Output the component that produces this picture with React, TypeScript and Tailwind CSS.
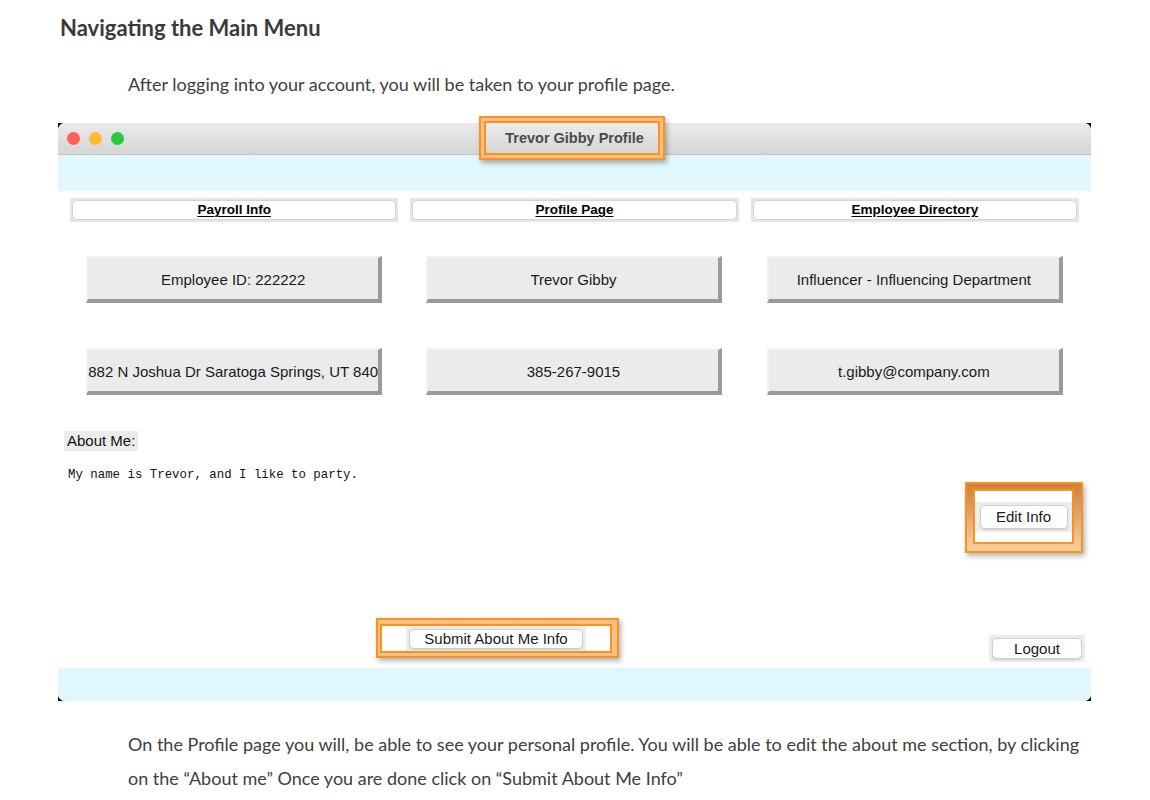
import React from "react";

const sans = { fontFamily: '"Liberation Sans", Arial, sans-serif' };

function Tab({ label }: { label: string }) {
  return (
    <div className="h-[24px] bg-[#e6e6e6] p-[2px] flex">
      <div className="flex-1 bg-white rounded-[5px] border border-[#d4d4d4] flex items-center justify-center">
        <span className="text-[13.5px] font-bold underline underline-offset-2 text-black leading-none">{label}</span>
      </div>
    </div>
  );
}

function InfoBtn({ label }: { label: string }) {
  return (
    <div className="w-[296px] h-[47px] pt-[3px] bg-[#ebebeb] border-t-2 border-l-2 border-t-[#f2f2f2] border-l-[#f2f2f2] border-b-4 border-r-4 border-b-[#9a9a9a] border-r-[#9a9a9a] flex items-center justify-center overflow-hidden">
      <span className="text-[15px] text-[#1a1a1a] whitespace-nowrap">{label}</span>
    </div>
  );
}

function MacBtn({ label, w }: { label: string; w: string }) {
  return (
    <div className={`${w} bg-white rounded-[5px] border border-[#cfcfcf] shadow-[0_1px_1px_rgba(0,0,0,0.12)] flex items-center justify-center`}>
      <span className="text-[15px] text-[#1a1a1a] leading-none">{label}</span>
    </div>
  );
}

export default function App() {
  return (
    <div className="relative w-[1150px] h-[800px] bg-white overflow-hidden" style={{ fontFamily: 'Lato, "Open Sans", sans-serif' }}>
      <h1 className="pl-[60px] pt-[14px] text-[22px] font-bold text-[#3a3a3a] leading-[28px]">Navigating the Main Menu</h1>
      <p className="pl-[128px] mt-[30px] text-[18px] text-[#404040] leading-[24px]">
        After logging into your account, you will be taken to your profile page.
      </p>

      {/* window */}
      <div className="ml-[58px] mt-[27px] w-[1033px] bg-black" style={sans}>
        <div className="rounded-[7px] overflow-hidden bg-white">
          {/* title bar */}
          <div className="relative h-[32px] bg-gradient-to-b from-[#ebebeb] to-[#d5d5d5] border-b border-[#c4c4c4] flex items-center">
            <div className="flex gap-[9px] pl-[9px]">
              <span className="w-[13px] h-[13px] rounded-full bg-[#fe5f57]" />
              <span className="w-[13px] h-[13px] rounded-full bg-[#febc2e]" />
              <span className="w-[13px] h-[13px] rounded-full bg-[#28c840]" />
            </div>
            <div className="absolute left-0 right-0 top-0 bottom-0 flex items-center justify-center">
              <span className="text-[14.5px] font-bold text-[#4a4a4a]">Trevor Gibby Profile</span>
            </div>
          </div>
          {/* cyan */}
          <div className="h-[36px] bg-[#e0f7fd]" />
          {/* body */}
          <div className="flex flex-col">
            <div className="grid grid-cols-3 gap-[12px] px-[12px] mt-[7px]">
              <Tab label="Payroll Info" />
              <Tab label="Profile Page" />
              <Tab label="Employee Directory" />
            </div>
            <div className="grid grid-cols-3 gap-x-[12px] gap-y-[45px] px-[12px] mt-[34px] justify-items-center">
              <InfoBtn label="Employee ID: 222222" />
              <InfoBtn label="Trevor Gibby" />
              <InfoBtn label="Influencer - Influencing Department" />
              <InfoBtn label="882 N Joshua Dr Saratoga Springs, UT 840" />
              <InfoBtn label="385-267-9015" />
              <InfoBtn label="t.gibby@company.com" />
            </div>
            <div className="pl-[6px] mt-[36px] flex">
              <span className="h-[20px] px-[3px] bg-[#ececec] text-[15px] text-[#111] leading-[20px]">About Me:</span>
            </div>
            <div className="pl-[10px] mt-[16px] text-[12.4px] leading-[16px] text-[#111]" style={{ fontFamily: '"Liberation Mono", "DejaVu Sans Mono", monospace' }}>
              My name is Trevor, and I like to party.
            </div>
            <div className="flex justify-end pr-[8px] -mt-[1px]">
              <div className="w-[118px] h-[71px] border-2 border-[#f7931e] bg-gradient-to-b from-[#cf7f3c] to-[#fcd0a2] pt-[5px] pl-[6px] pr-[7px] pb-[7px] shadow-[2px_3px_5px_rgba(0,0,0,0.3)] flex">
                <div className="flex-1 border-2 border-[#f7931e] bg-white flex items-center">
                  <div className="w-full h-[30px] bg-[#ececec] flex items-center justify-center">
                    <MacBtn label="Edit Info" w="w-[88px] h-[24px]" />
                  </div>
                </div>
              </div>
            </div>
            <div className="flex items-start mt-[65px] pb-[6px]">
              <div className="ml-[318px] w-[243px] h-[40px] border-2 border-[#f7931e] bg-[#fbbf84] pt-[4px] pl-[2px] pr-[5px] pb-[3px] shadow-[2px_3px_5px_rgba(0,0,0,0.3)] flex">
                <div className="flex-1 border-2 border-[#f7931e] bg-white flex items-center justify-center">
                  <div className="w-[180px] h-[25px] bg-[#ececec] flex items-center justify-center">
                    <MacBtn label="Submit About Me Info" w="w-[174px] h-[20px]" />
                  </div>
                </div>
              </div>
              <div className="ml-auto mr-[6px] mt-[17px] w-[96px] h-[27px] bg-[#ececec] flex items-center justify-center">
                <MacBtn label="Logout" w="w-[90px] h-[21px]" />
              </div>
            </div>
          </div>
          <div className="h-[33px] bg-[#e0f7fd]" />
        </div>
      </div>

      <p className="pl-[128px] mt-[26px] text-[18px] text-[#404040] leading-[34px]">
        On the Profile page you will, be able to see your personal profile. You will be able to edit the about me section, by clicking
        <br />
        on the “About me” Once you are done click on “Submit About Me Info”
      </p>

      {/* title annotation overlay */}
      <div className="absolute left-[479px] top-[116px] w-[186px] h-[44px] border-2 border-[#f7931e] p-[3px] shadow-[2px_3px_5px_rgba(0,0,0,0.3)]">
        <div className="w-full h-full border-2 border-[#f7931e] outline outline-[3px] outline-[#fbbf84]" />
      </div>
    </div>
  );
}
